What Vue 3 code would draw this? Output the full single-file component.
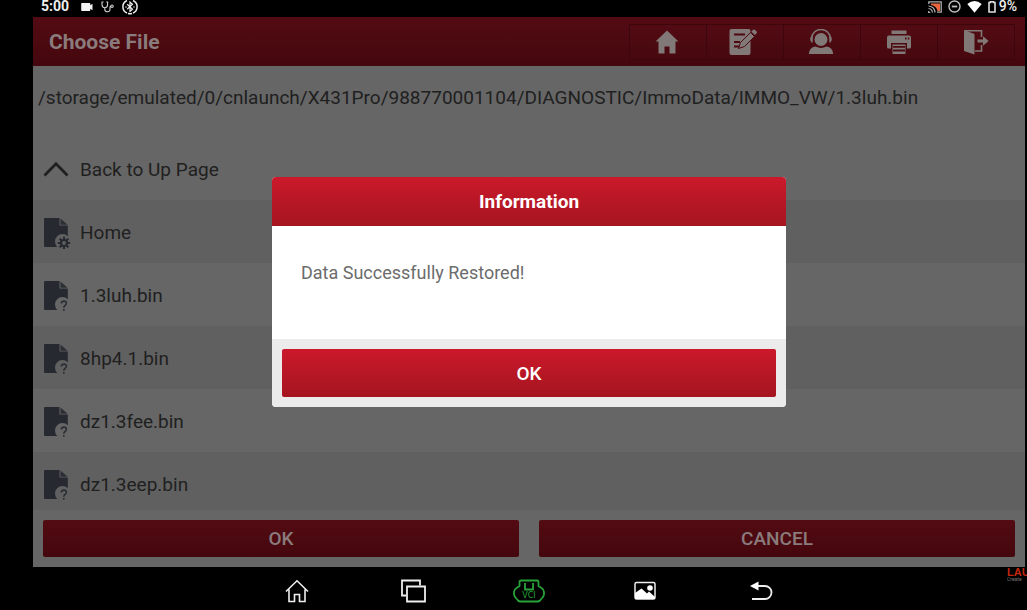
<script setup>
const path = '/storage/emulated/0/cnlaunch/X431Pro/988770001104/DIAGNOSTIC/ImmoData/IMMO_VW/1.3luh.bin'
const files = [
  { name: 'Home', kind: 'folder' },
  { name: '1.3luh.bin', kind: 'file' },
  { name: '8hp4.1.bin', kind: 'file' },
  { name: 'dz1.3fee.bin', kind: 'file' },
  { name: 'dz1.3eep.bin', kind: 'file' }
]
const teeth = [0, 45, 90, 135, 180, 225, 270, 315]
</script>

<template>
  <div class="device">
    <div class="status">
      <div class="status-group">
        <span class="clock">5:00</span>
        <svg class="cam" width="12" height="10" viewBox="0 0 12 10"><path d="M1 1h7.500q.8 0 .8.800v1.400l2.200-1.500v6.600l-2.200-1.500v1.400q0 .8-.8.800H1q-.8 0-.8-.8V1.800q0-.8.8-.8z" fill="#f2f2f2" /></svg>
        <svg width="13" height="12" viewBox="0 0 13 12" fill="none" stroke="#d0d0d0" stroke-width="1.100"><path d="M2.500 1H1v2.500q0 3 2.800 3.200Q6.600 6.500 6.600 3.500V1H5.200M3.800 6.700v1.500q0 2.600 2.600 2.600Q9 10.800 9 8.400V6.200q0-.8 1-.8" /><circle cx="11" cy="5.200" r="1.200" /></svg>
        <svg width="16" height="16" viewBox="0 0 16 16" fill="none" stroke="#ededed"><path d="M5 1.500A6.800 6.800 0 0 0 5 14M11 1.500A6.800 6.800 0 0 1 11 14M6 14.500q2 .5 4 0" stroke-width="1.500" /><path d="M5.200 5.200l5.300 5-2.500 2.300V3l2.500 2.300-5.300 5" stroke-width="1.200" /><path d="M3.500 8h1M11.500 8h1" stroke-width="1.400" /></svg>
      </div>
      <div class="status-group right">
        <svg width="14" height="12" viewBox="0 0 14 12"><path d="M.8 3V.8h12.400v10.400H9" fill="none" stroke="#aaa" stroke-width="1.300" /><path d="M3 2.500h9v7.500H9.500Q8.500 5 3 4z" fill="#e8663d" /><path d="M.7 10v1.500h1.500M.5 7.500q3.500.3 4 4M.5 5q6 .5 6.500 6.500" fill="none" stroke="#b5b5b5" stroke-width="1.200" /></svg>
        <svg width="13" height="13" viewBox="0 0 13 13" fill="none" stroke="#bdbdbd" stroke-width="1.400"><circle cx="6.500" cy="6.500" r="5.500" /><path d="M3.800 6.500h5.400" stroke-width="1.800" /></svg>
        <svg width="15" height="12" viewBox="0 0 15 12"><path d="M.3 3Q7.500-3 14.700 3L7.500 11.700z" fill="#fff" /></svg>
        <div class="power">
          <svg width="8" height="12" viewBox="0 0 8 12"><path d="M1 1.500h1.500V.8h3v.7H7V11H1z" fill="none" stroke="#dedede" stroke-width="1.600" /></svg>
          <span>9%</span>
        </div>
      </div>
    </div>

    <main class="screen">
      <header class="header">
        <h1>Choose File</h1>
        <div class="tools">
          <button type="button" aria-label="Home">
            <svg width="24" height="24" viewBox="0 0 24 24"><path d="M12 .5L.5 11.500h3V23.500h6v-7h5v7h6v-12h3z" /></svg>
          </button>
          <button type="button" aria-label="Edit" class="edit">
            <svg width="28" height="28" viewBox="0 0 28 28"><path d="M2.500 1h17q2 0 2 2v22q0 2-2 2h-17q-2 0-2-2V3q0-2 2-2z" /><path class="cut" d="M5 6.500h11M5 14h6M5 18.500h8" /><path class="outline" d="M21.500 4.500l4 4L15.500 18.500l-6 2 2-6z" /><path d="M22.300 3.700l1.900-1.900q.8-.7 1.600 0l1.800 1.800q.7.800 0 1.600l-1.700 1.900z" /></svg>
          </button>
          <button type="button" aria-label="Support">
            <svg width="26" height="26" viewBox="0 0 26 26"><circle cx="13" cy="10.500" r="6.500" /><path class="line thin" d="M3.800 9A9.200 8.500 0 0 1 22.200 9" /><path d="M2.500 8h2.200v5.500H3.500q-2-2.700-1-5.500zM21.300 8h2.200q1 2.800-1 5.500h-1.200zM.8 25q.6-6.500 6.600-7.400 5.600 2.800 11.200 0 6 .9 6.600 7.400z" /></svg>
          </button>
          <button type="button" aria-label="Print" class="print">
            <svg width="26" height="26" viewBox="0 0 26 26"><path d="M5.500 1.500h15v3.500h-15zM3 6.500h20q2 0 2 2V18q0 1.500-1.500 1.500H21v-5.500H5v5.500H2.500Q1 19.500 1 18V8.500q0-2 2-2z" /><path d="M6.500 15.500h13V25h-13z" /><path class="cut" d="M7 17.800h12M7 21.500h12M19 9.500h1.500M21.800 9.500h1.500" /></svg>
          </button>
          <button type="button" aria-label="Exit" class="print">
            <svg width="26" height="26" viewBox="0 0 26 26"><path d="M1 1l10.500 4v20.500L1 22z" /><path class="line thin" d="M2 1.800h16.500V8M18.500 16v6H12" /><path d="M14.500 10.500H20V7.300l5.700 4.700-5.700 4.700v-3.200h-5.500z" /></svg>
          </button>
        </div>
      </header>

      <p class="path">{{ path }}</p>

      <ul class="files">
        <li>
          <button type="button" class="row">
            <svg width="28" height="32" viewBox="0 0 28 32" fill="none" stroke="#202020" stroke-width="2.800"><path d="M1.500 21.500L13 9.800l11.500 11.700" /></svg>
            <span>Back to Up Page</span>
          </button>
        </li>
        <li v-for="file in files" :key="file.name">
          <button type="button" class="row">
            <svg width="28" height="32" viewBox="0 0 28 32">
              <path d="M2 1h14.500v7.500h8.300v10.700A7.500 7.500 0 0 0 14.300 30H2q-1 0-1-1V2q0-1 1-1z" fill="#262930" />
              <path d="M17.500 1.500l7 6.300h-7z" fill="#2b2e34" />
              <g v-if="file.kind === 'folder'" transform="translate(21 26)">
                <circle r="3" fill="none" stroke="#262930" stroke-width="2.200" />
                <path v-for="angle in teeth" :key="angle" d="M0-3.500V-6.200" stroke="#262930" stroke-width="2" :transform="`rotate(${angle})`" />
              </g>
              <g v-else fill="none" stroke="#2b2e34" stroke-width="1.600"><path d="M18.300 23.500q.2-2.400 2.600-2.400 2.500 0 2.500 2.200 0 1.300-1.400 2.200-1.200.8-1.200 2.300M20.800 29v1.800" /></g>
            </svg>
            <span>{{ file.name }}</span>
          </button>
        </li>
      </ul>

      <footer class="actions">
        <button type="button">OK</button>
        <button type="button">CANCEL</button>
      </footer>

      <div class="overlay">
        <section class="dialog" role="dialog" aria-modal="true" aria-labelledby="dialog-title">
          <h2 id="dialog-title">Information</h2>
          <p>Data Successfully Restored!</p>
          <div class="dialog-foot"><button type="button">OK</button></div>
        </section>
      </div>
    </main>

    <nav class="nav">
      <button type="button" aria-label="Launcher">
        <svg width="24" height="24" viewBox="0 0 24 24" fill="none" stroke="#eee" stroke-width="1.600"><path d="M1 12.500L12 1.800l11 10.700M4 10.500V22.500h5.500V15.500h5v7H20V10.500" /></svg>
      </button>
      <button type="button" aria-label="Recent apps">
        <svg width="26" height="24" viewBox="0 0 26 24" fill="none" stroke="#eee" stroke-width="1.800"><path d="M6 16.500H2V1.500h18v5" /><path d="M7 7.500h18v15H7z" /></svg>
      </button>
      <button type="button" aria-label="VCI">
        <svg width="32" height="24" viewBox="0 0 32 24" fill="none" stroke="#27a33a" stroke-width="1.800"><path d="M8 1.500h16q1.500 0 1.500 1.500v4l3 2q2.500 1.500 2.500 4v2q0 2-1.500 3.500L27 21.500q-1 1-2.500 1h-17q-1.500 0-2.500-1l-2.500-3Q1 17 1 15v-2q0-2.500 2.500-4l3-2V3q0-1.500 1.500-1.500z" /><path d="M12 4v6.500h8V4" /><text x="16" y="19" text-anchor="middle" class="vci">VCI</text></svg>
      </button>
      <button type="button" aria-label="Screenshot">
        <svg width="24" height="24" viewBox="0 0 24 24"><rect x="2" y="3.500" width="20" height="16.500" rx="1.500" fill="none" stroke="#eee" stroke-width="1.500" /><path d="M2 14L8.500 9.500l5.500 5 2-2 6 5.500v2H2z" fill="#fff" /><circle cx="17" cy="9" r="2.800" fill="#fff" /></svg>
      </button>
      <button type="button" aria-label="Back">
        <svg width="24" height="24" viewBox="0 0 24 24"><path d="M7 7h9a6.500 6.500 0 0 1 0 13H3" fill="none" stroke="#eee" stroke-width="1.800" /><path d="M1 7l8.500-4.500v9z" fill="#fff" /></svg>
      </button>
    </nav>

    <div class="brand"><strong>LAU</strong><small>Create</small></div>
  </div>
</template>

<style>
body { background: #000; }
</style>

<style scoped>
* { box-sizing: border-box; }
button {
  appearance: none;
  border: 0;
  padding: 0;
  background: none;
  color: inherit;
  font: inherit;
}
svg { display: block; flex: none; }
h1, h2, p, ul { margin: 0; padding: 0; }
.device {
  position: relative;
  display: flex;
  flex-direction: column;
  min-height: 100vh;
  padding: 0 2px 0 33px;
  overflow: hidden;
  background: #000;
  font-family: Roboto, sans-serif;
}
.status {
  display: flex;
  justify-content: space-between;
  height: 17px;
  padding: 0 8px;
  color: #eee;
  font-size: 14px;
  font-weight: 500;
  line-height: 13px;
}
.status-group { display: flex; align-items: center; gap: 8px; height: 13px; }
.right { gap: 6px; }
.power { display: flex; align-items: center; gap: 3px; }
.clock { margin-right: 4px; font-weight: 700; }
.screen {
  position: relative;
  display: flex;
  flex: 1;
  flex-direction: column;
  background: #666;
}
.header {
  display: flex;
  align-items: center;
  justify-content: space-between;
  height: 49px;
  padding: 0 10px 0 16px;
  background: linear-gradient(#530b13, #44070d);
  color: #8a7b7c;
}
h1 { font-size: 21px; font-weight: 700; line-height: 24px; }
.tools { display: flex; border: 1px solid #3d060b; border-left: 0; }
.tools button {
  display: flex;
  align-items: center;
  justify-content: center;
  width: 77px;
  height: 34px;
  padding-right: 2px;
  border-left: 1px solid #3d060b;
  background: linear-gradient(#530b13, #46080e);
}
.tools .edit { padding-right: 4px; }
.tools .print { padding-right: 0; }
.tools svg { fill: #817878; }
.tools .cut { fill: none; stroke: #4c0910; stroke-width: 1.800; }
.tools .outline { stroke: #4c0910; stroke-width: 1; }
.tools .line { fill: none; stroke: #817878; stroke-width: 2; }
.tools .thin { stroke-width: 1.600; }
.path {
  height: 71px;
  padding: 20px 5px 0;
  color: #202020;
  font-size: 19px;
  line-height: 24px;
}
.files { flex: 1 1 0; height: 0; overflow: hidden; list-style: none; }
.files li:nth-child(even) { background: #606060; }
.row {
  display: flex;
  align-items: center;
  gap: 9px;
  width: 100%;
  height: 63px;
  padding: 2px 10px 0;
  color: #202020;
  font-size: 19px;
  text-align: left;
}
.actions { display: flex; gap: 20px; padding: 10px; background: #666; }
.actions button {
  flex: 1;
  height: 37px;
  border-radius: 2px;
  background: linear-gradient(#530b13, #44070d);
  color: #8a7b7c;
  font-size: 19px;
  font-weight: 500;
}
.overlay {
  position: absolute;
  inset: 0;
  display: flex;
  align-items: center;
  justify-content: center;
}
.dialog {
  width: 52%;
  max-width: 514px;
  overflow: hidden;
  border-radius: 4px;
  background: #fff;
}
h2 {
  background: linear-gradient(#cb192b, #a5151f);
  color: #fff;
  font-size: 19px;
  font-weight: 700;
  line-height: 49px;
  text-align: center;
}
.dialog p {
  height: 113px;
  padding: 35px 29px 0;
  color: #6c6c6c;
  font-size: 18px;
  line-height: 24px;
}
.dialog-foot { padding: 10px; background: #ebebeb; }
.dialog-foot button {
  display: block;
  width: 100%;
  height: 48px;
  border-radius: 2px;
  background: linear-gradient(#cb192b, #a5151f);
  color: #fff;
  font-size: 19px;
  font-weight: 500;
}
.nav { display: flex; justify-content: center; height: 43px; padding-top: 4px; }
.nav button { display: flex; align-items: center; justify-content: center; width: 116px; }
.vci {
  fill: #27a33a;
  stroke: none;
  font-family: "DejaVu Sans", sans-serif;
  font-size: 8px;
}
.brand {
  position: absolute;
  right: 0;
  bottom: 28px;
  width: 20px;
  overflow: hidden;
  white-space: nowrap;
}
.brand strong {
  display: block;
  color: #c3260f;
  font-family: "Liberation Sans", sans-serif;
  font-size: 11px;
  line-height: 10px;
}
.brand small { display: block; color: #777; font-size: 5px; line-height: 5px; }
</style>
